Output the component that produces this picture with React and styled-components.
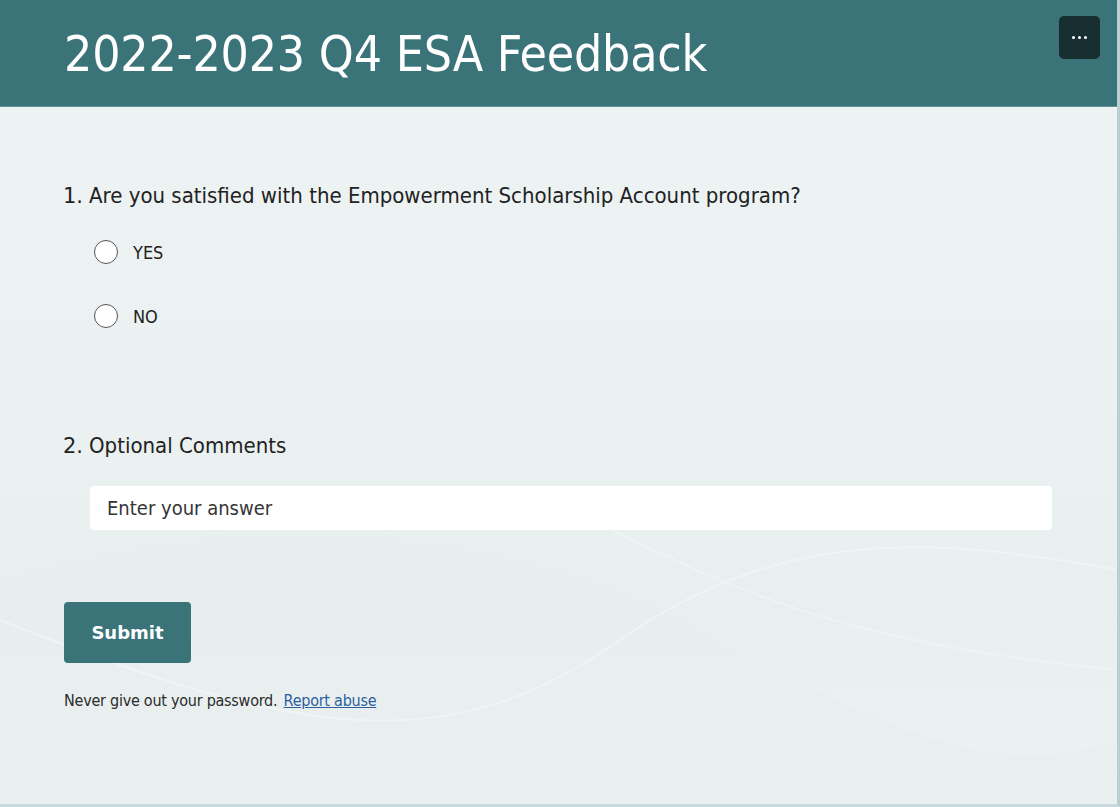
import React from "react";
import styled, { createGlobalStyle } from "styled-components";

const Global = createGlobalStyle`
  html, body { margin: 0; padding: 0; }
  body {
    font-family: "DejaVu Sans Condensed", "DejaVu Sans", sans-serif;
    background: #edf2f2;
  }
`;

const Page = styled.div`
  position: relative;
  width: 1120px;
  height: 807px;
  box-sizing: border-box;
  border-right: 3px solid #b9cfd1;
  border-bottom: 3px solid #c7dadb;
  background: linear-gradient(180deg, #eef3f3 0%, #ebf1f1 55%, #e8efef 75%, #ecf2f2 100%);
  overflow: hidden;
  display: flex;
  flex-direction: column;
`;

const Waves = styled.svg`
  position: absolute;
  left: 0;
  top: 480px;
  width: 1120px;
  height: 327px;
  pointer-events: none;
`;

const Header = styled.header`
  position: relative;
  z-index: 1;
  height: 107px;
  background: #3a7479;
  border-bottom: 1px solid #5f9297;
  display: flex;
  align-items: center;
  justify-content: space-between;
  padding: 0 17px 0 64px;
  box-sizing: border-box;
`;

const Title = styled.h1`
  margin: 1px 0 0 0;
  color: #fff;
  font-family: "DejaVu Sans Condensed", "DejaVu Sans", sans-serif;
  font-weight: 400;
  font-size: 49.5px;
  letter-spacing: -0.2px;
  align-self: center;
`;

const MenuButton = styled.button`
  align-self: flex-start;
  margin-top: 16px;
  width: 41px;
  height: 43px;
  border: none;
  border-radius: 5px;
  background: #172f30;
  display: flex;
  align-items: center;
  justify-content: center;
  gap: 3px;
  padding: 0;
`;

const Dot = styled.span`
  width: 3px;
  height: 3px;
  border-radius: 50%;
  background: #fff;
`;

const Body = styled.main`
  position: relative;
  z-index: 1;
  padding: 76px 0 0 63px;
  display: flex;
  flex-direction: column;
`;

const Question = styled.section`
  display: flex;
  flex-direction: column;
  margin-bottom: ${(p) => p.$mb || 0}px;
`;

const QTitle = styled.div`
  font-size: 22px;
  color: #222;
  line-height: 26px;
  display: flex;
  gap: 6px;
`;

const Num = styled.span`
  font-family: "DejaVu Sans", sans-serif;
  font-size: 21px;
`;

const Options = styled.div`
  display: flex;
  flex-direction: column;
  gap: 38px;
  margin-top: 30px;
  padding-left: 31px;
`;

const Option = styled.label`
  display: flex;
  align-items: center;
  gap: 15px;
  font-size: 18px;
  color: #1e1e1e;
  height: 26px;
`;

const Radio = styled.span`
  width: 24px;
  height: 24px;
  border-radius: 50%;
  border: 1.5px solid #555;
  background: #fff;
  box-sizing: border-box;
`;

const Input = styled.div`
  margin-top: 27px;
  margin-left: 27px;
  width: 962px;
  height: 44px;
  background: #fff;
  border-radius: 4px;
  display: flex;
  align-items: center;
  padding-left: 17px;
  box-sizing: border-box;
  font-size: 20px;
  color: #363636;
`;

const Submit = styled.button`
  width: 127px;
  height: 61px;
  border: none;
  border-radius: 4px;
  background: #3a7479;
  color: #fff;
  font-family: "DejaVu Sans", sans-serif;
  font-weight: 700;
  font-size: 18px;
  padding: 0;
  margin-left: 1px;
`;

const Footer = styled.p`
  margin: 28px 0 0 1px;
  font-size: 16px;
  letter-spacing: -0.25px;
  color: #2b2b2b;
`;

const Link = styled.a`
  color: #2b5f9e;
  text-decoration: underline;
  margin-left: 2px;
`;

export default function App() {
  return (
    <>
      <Global />
      <Page>
        <Waves viewBox="0 0 1120 327" preserveAspectRatio="none">
          <path d="M0 100 C 250 20, 500 40, 700 150 S 1000 300, 1120 260 L1120 327 L0 327 Z" fill="#e7eeee" opacity="0.5" />
          <path d="M0 140 C 300 260, 450 280, 620 160 S 950 60, 1120 90" fill="none" stroke="#eff4f4" strokeWidth="2" />
          <path d="M550 20 C 700 90, 800 160, 1120 190" fill="none" stroke="#eff4f4" strokeWidth="1.5" />
        </Waves>
        <Header>
          <Title>2022-2023 Q4 ESA Feedback</Title>
          <MenuButton aria-label="More">
            <Dot />
            <Dot />
            <Dot />
          </MenuButton>
        </Header>
        <Body>
          <Question $mb={104}>
            <QTitle>
              <Num>1.</Num>
              <span>Are you satisfied with the Empowerment Scholarship Account program?</span>
            </QTitle>
            <Options>
              <Option>
                <Radio />
                YES
              </Option>
              <Option>
                <Radio />
                NO
              </Option>
            </Options>
          </Question>
          <Question $mb={72}>
            <QTitle>
              <Num>2.</Num>
              <span>Optional Comments</span>
            </QTitle>
            <Input>Enter your answer</Input>
          </Question>
          <Submit>Submit</Submit>
          <Footer>
            Never give out your password. <Link href="#">Report abuse</Link>
          </Footer>
        </Body>
      </Page>
    </>
  );
}
